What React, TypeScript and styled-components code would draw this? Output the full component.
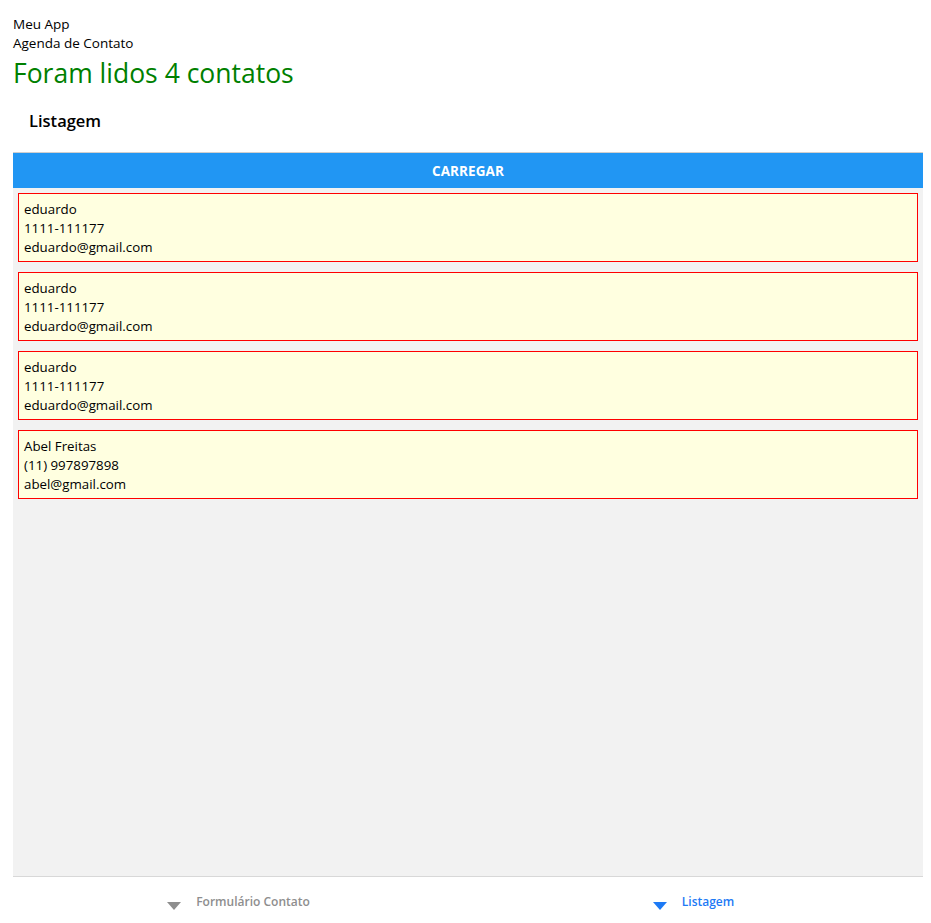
import React from "react";
import styled, { createGlobalStyle } from "styled-components";

const Global = createGlobalStyle`
  html, body { margin: 0; padding: 0; background: #fff; }
  body { font-family: "Open Sans", "Noto Sans", sans-serif; color: #000; }
  #root { height: 923px; }
`;

const Page = styled.div`
  height: 923px;
  box-sizing: border-box;
  padding: 15px 8px 0 13px;
  display: flex;
  flex-direction: column;
`;

const Line = styled.div`
  font-size: 13.5px;
  line-height: 19px;
`;

const Title = styled.div`
  color: #008000;
  font-size: 26.5px;
  line-height: 36px;
  margin-top: 2px;
`;

const Section = styled.div`
  font-weight: 600;
  font-size: 16.5px;
  line-height: 22px;
  padding: 0 0 0 16px;
  margin-top: 19px;
  margin-bottom: 20px;
`;

const Button = styled.button`
  display: block;
  width: 100%;
  height: 36px;
  border: none;
  border-top: 1px solid #cfcfcf;
  background: #2196f3;
  color: #fff;
  font-family: inherit;
  font-weight: 700;
  font-size: 13.5px;
  letter-spacing: 0.1px;
  text-transform: uppercase;
  padding: 0;
`;

const List = styled.div`
  flex: 1;
  background: #f2f2f2;
  padding: 5px 5px;
  border-bottom: 1px solid #d8d8d8;
  display: flex;
  flex-direction: column;
  gap: 10px;
`;

const Card = styled.div`
  border: 1px solid #ff0000;
  background: #ffffe0;
  padding: 6px 5px 4px;
  font-size: 13.3px;
  line-height: 19px;
`;

const Tabs = styled.div`
  height: 46px;
  display: flex;
`;

const Tab = styled.div<{ $active?: boolean }>`
  flex: 1;
  display: flex;
  align-items: center;
  justify-content: center;
  gap: 15px;
  padding-top: 4px;
  padding-right: 4px;
  color: ${(p) => (p.$active ? "#1d7af5" : "#8e8e8e")};
  font-size: 12px;
  font-weight: 600;
`;

const Tri = styled.svg`
  width: 14px;
  height: 8px;
  margin-top: 8px;
`;

const TabLabel = styled.span`
  margin-top: -2px;
`;

const contacts = [
  { nome: "eduardo", tel: "1111-111177", email: "eduardo@gmail.com" },
  { nome: "eduardo", tel: "1111-111177", email: "eduardo@gmail.com" },
  { nome: "eduardo", tel: "1111-111177", email: "eduardo@gmail.com" },
  { nome: "Abel Freitas", tel: "(11) 997897898", email: "abel@gmail.com" },
];

const Arrow = () => (
  <Tri viewBox="0 0 14 8">
    <path d="M0 0 H14 L7 8 Z" fill="currentColor" />
  </Tri>
);

export default function App() {
  return (
    <>
      <Global />
      <Page>
        <Line>Meu App</Line>
        <Line>Agenda de Contato</Line>
        <Title>Foram lidos 4 contatos</Title>
        <Section>Listagem</Section>
        <Button>Carregar</Button>
        <List>
          {contacts.map((c, i) => (
            <Card key={i}>
              <div>{c.nome}</div>
              <div>{c.tel}</div>
              <div>{c.email}</div>
            </Card>
          ))}
        </List>
        <Tabs>
          <Tab>
            <Arrow />
            <TabLabel>Formulário Contato</TabLabel>
          </Tab>
          <Tab $active>
            <Arrow />
            <TabLabel>Listagem</TabLabel>
          </Tab>
        </Tabs>
      </Page>
    </>
  );
}
